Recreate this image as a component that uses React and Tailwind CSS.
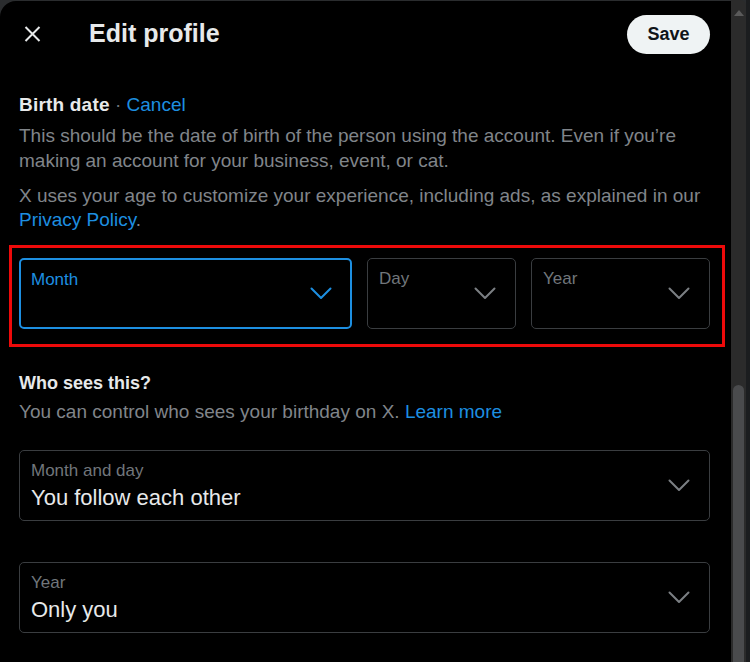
import React from "react";

const font = { fontFamily: '"Liberation Sans", Arial, sans-serif' };

function Chevron({ color = "#71767b" }) {
  return (
    <svg width="22" height="13" viewBox="0 0 22 13" fill="none">
      <path d="M1.5 1.5 L11 11 L20.5 1.5" stroke={color} strokeWidth="2" strokeLinecap="round" strokeLinejoin="round" />
    </svg>
  );
}

function SelectBox({ label, value, focused = false, className = "" }) {
  return (
    <div
      className={`relative h-[71px] rounded-[5px] ${
        focused ? "border-2 border-[#1d8fe1] px-[10px]" : "border border-[#3a3d40] px-[11px]"
      } flex items-center ${className}`}
    >
      <div className="flex-1 min-w-0 self-start pt-[8px]">
        <div className={`text-[17px] leading-[23px] ${focused ? "text-[#1d8fe1]" : "text-[#71767b]"}`}>
          {label}
        </div>
        {value && <div className="text-[22px] leading-[28px] text-[#e7e9ea] mt-[2px]">{value}</div>}
      </div>
      <div className="shrink-0 mr-[8px]">
        <Chevron color={focused ? "#1d8fe1" : "#7b7f83"} />
      </div>
    </div>
  );
}

export default function App() {
  return (
    <div className="w-[750px] h-[662px] bg-[#2a2c2e] flex overflow-hidden" style={font}>
      {/* Modal */}
      <div className="w-[731px] mt-[1px] bg-black rounded-tl-[16px] flex flex-col">
        {/* Header */}
        <div className="h-[66px] flex items-center pl-[16px] pr-[21px]">
          <button aria-label="Close" className="w-[32px] h-[32px] flex items-center justify-center">
            <svg width="17" height="16" viewBox="0 0 17 16" fill="none">
              <path d="M1.5 1 L15.5 15 M15.5 1 L1.5 15" stroke="#e7e9ea" strokeWidth="2" />
            </svg>
          </button>
          <h2 className="ml-[41px] text-[25px] font-bold text-[#e7e9ea]">Edit profile</h2>
          <div className="flex-1" />
          <button className="h-[39px] w-[83px] rounded-full bg-[#eff3f4] text-[#0f1419] text-[18px] font-bold">
            Save
          </button>
        </div>

        {/* Body */}
        <div className="pl-[19px] pr-[21px] pt-[26px]">
          <div className="text-[19px] leading-[24px]">
            <span className="font-bold text-[#e7e9ea] tracking-[0.2px]">Birth date</span>
            <span className="text-[#71767b]"> · </span>
            <span className="text-[#1d8fe1]">Cancel</span>
          </div>
          <p className="mt-[6px] text-[19px] leading-[25px] text-[#80858a]">
            This should be the date of birth of the person using the account. Even if you’re making an account for
            your business, event, or cat.
          </p>
          <p className="mt-[11px] text-[19px] leading-[24px] text-[#80858a]">
            X uses your age to customize your experience, including ads, as explained in our{" "}
            <span className="text-[#1d8fe1]">Privacy Policy</span>.
          </p>

          {/* Highlighted date pickers */}
          <div className="mt-[13px] ml-[-10px] mr-[-15px] border-[3px] border-[#ee0a0a] pt-[10px] pb-[15px] pl-[7px] pr-[12px] flex gap-[15px]">
            <SelectBox label="Month" focused className="w-[333px]" />
            <SelectBox label="Day" className="w-[149px]" />
            <SelectBox label="Year" className="w-[179px]" />
          </div>

          <div className="mt-[24px] text-[18px] leading-[24px] font-bold text-[#e7e9ea]">Who sees this?</div>
          <p className="mt-[5px] text-[19px] leading-[24px] text-[#80858a]">
            You can control who sees your birthday on X. <span className="text-[#1d8fe1]">Learn more</span>
          </p>

          <SelectBox label="Month and day" value="You follow each other" className="mt-[26px]" />
          <SelectBox label="Year" value="Only you" className="mt-[41px]" />
        </div>
      </div>

      {/* Scrollbar */}
      <div className="w-[15px] bg-[#2b2b2b] rounded-tr-[6px] flex flex-col items-center">
        <svg width="12" height="8" viewBox="0 0 12 8" className="mt-[9px]">
          <path d="M6 1 L11 7 L1 7 Z" fill="#5a5a5a" />
        </svg>
        <div className="mt-[368px] w-[11px] flex-1 bg-[#4a4b4d] rounded-t-full" />
      </div>
      <div className="flex-1 bg-[#1b1d1f]" />
    </div>
  );
}
